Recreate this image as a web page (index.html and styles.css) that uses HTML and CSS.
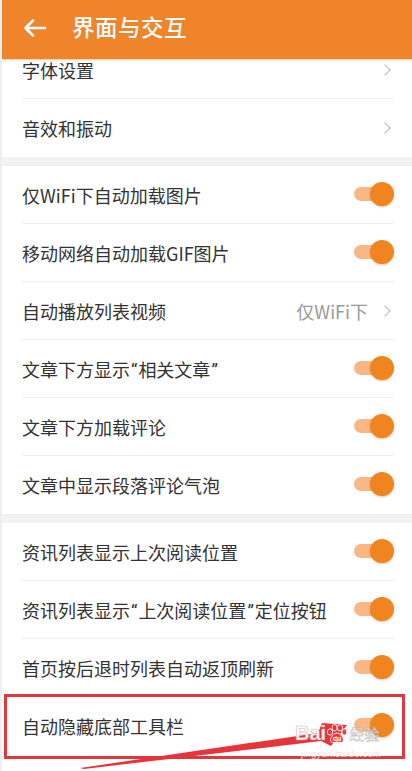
FILE: index.html
```html
<!DOCTYPE html>
<html lang="zh-CN">
<head>
<meta charset="utf-8">
<title>界面与交互</title>
<link rel="stylesheet" href="styles.css">
</head>
<body>
<div class="page">
  <header class="appbar">
    <svg class="back" width="24" height="20" viewBox="0 0 24 20"><path d="M22 10H3M10 2.5L2.5 10L10 17.5" fill="none" stroke="#fff" stroke-width="2.6" stroke-linecap="round" stroke-linejoin="round"/></svg>
    <h1 class="title">界面与交互</h1>
  </header>
  <main class="content">
    <section class="group">
      <div class="row"><span class="label">字体设置</span><span class="chev"></span></div>
      <div class="row"><span class="label">音效和振动</span><span class="chev"></span></div>
    </section>
    <section class="group">
      <div class="row"><span class="label">仅WiFi下自动加载图片</span><span class="toggle"><span class="track"></span><span class="knob"></span></span></div>
      <div class="row"><span class="label">移动网络自动加载GIF图片</span><span class="toggle"><span class="track"></span><span class="knob"></span></span></div>
      <div class="row"><span class="label">自动播放列表视频</span><span class="value">仅WiFi下</span><span class="chev"></span></div>
      <div class="row"><span class="label">文章下方显示<span class="q">“</span>相关文章<span class="q">”</span></span><span class="toggle"><span class="track"></span><span class="knob"></span></span></div>
      <div class="row"><span class="label">文章下方加载评论</span><span class="toggle"><span class="track"></span><span class="knob"></span></span></div>
      <div class="row"><span class="label">文章中显示段落评论气泡</span><span class="toggle"><span class="track"></span><span class="knob"></span></span></div>
    </section>
    <section class="group">
      <div class="row"><span class="label">资讯列表显示上次阅读位置</span><span class="toggle"><span class="track"></span><span class="knob"></span></span></div>
      <div class="row"><span class="label">资讯列表显示<span class="q">“</span>上次阅读位置<span class="q">”</span>定位按钮</span><span class="toggle"><span class="track"></span><span class="knob"></span></span></div>
      <div class="row"><span class="label">首页按后退时列表自动返顶刷新</span><span class="toggle"><span class="track"></span><span class="knob"></span></span></div>
      <div class="row"><span class="label">自动隐藏底部工具栏</span><span class="toggle"><span class="track"></span><span class="knob"></span></span></div>
    </section>
  </main>

  <svg class="annot" width="412" height="771" viewBox="0 0 412 771">
    <rect x="5.5" y="695.5" width="398" height="62" fill="none" stroke="#e0383c" stroke-width="3"/>
    <polygon points="80,768 318,733 322,723 347,725 331,746 321,741 84,769" fill="#e8333a"/>
  </svg>

  <div class="watermark">
    <div class="wm-top">
      <span class="wm-bai">Bai</span>
      <svg class="paw" width="22" height="20" viewBox="0 0 22 20">
        <ellipse cx="4" cy="8" rx="2.6" ry="3.2" fill="#e8333a" stroke="#fff" stroke-width="1"/>
        <ellipse cx="8.5" cy="3.8" rx="2.6" ry="3.2" fill="#e8333a" stroke="#fff" stroke-width="1"/>
        <ellipse cx="14" cy="3.8" rx="2.6" ry="3.2" fill="#e8333a" stroke="#fff" stroke-width="1"/>
        <ellipse cx="18.4" cy="8" rx="2.6" ry="3.2" fill="#e8333a" stroke="#fff" stroke-width="1"/>
        <path d="M11 9c3 0 6.5 4 6.5 7 0 2.5-2.5 3-6.5 2-4 1-6.5 .5-6.5-2 0-3 3.5-7 6.5-7z" fill="#e8333a" stroke="#fff" stroke-width="1"/>
        <text x="11" y="17" text-anchor="middle" font-size="7" fill="#fff" font-family="Liberation Sans, sans-serif" font-weight="bold">du</text>
      </svg>
      <span class="wm-jy">经验</span>
    </div>
    <div class="wm-url">jingyan.baidu.com</div>
  </div>
</div>
</body>
</html>
```
FILE: styles.css
```css
* { box-sizing: border-box; }
html, body { margin: 0; padding: 0; }
body {
  background: #ffffff;
  font-family: "Noto Sans CJK SC", "Noto Sans", sans-serif;
}
.page {
  position: relative;
  width: 412px;
  height: 771px;
  overflow: hidden;
  background: #fff;
  border-left: 2px solid #eeeeee;
}
.appbar {
  position: relative;
  z-index: 2;
  height: 59px;
  background: #f0842a;
  display: flex;
  align-items: center;
  padding-left: 21px;
  box-shadow: 0 1px 1px rgba(240,132,42,0.35);
}
.back { flex: none; margin-top: -3px; }
.title {
  margin: -6px 0 0 25px;
  color: #fff;
  font-size: 22.5px;
  font-weight: 500;
  letter-spacing: 0.5px;
  line-height: 1;
}
.content {
  margin-top: -18px;
  background: #f2f2f2;
  display: flex;
  flex-direction: column;
  gap: 9px;
}
.group { background: #fff; }
.row {
  height: 58px;
  display: flex;
  align-items: center;
  padding: 0 20px 0 20px;
  position: relative;
}
.row + .row::before {
  content: "";
  position: absolute;
  top: -1px;
  left: 20px;
  right: 18px;
  height: 1px;
  background: #efefef;
}
.label {
  flex: 1;
  font-size: 18px;
  color: #333333;
  white-space: nowrap;
  margin-top: -1px;
}
.q {
  font-family: Roboto, "Noto Sans", sans-serif;
  margin: 0 1px;
}
.value {
  font-size: 18px;
  color: #9a9a9a;
  margin-right: 13px;
  margin-top: -1px;
}
.chev {
  width: 8px;
  height: 8px;
  border-top: 1.5px solid #b8b8b8;
  border-right: 1.5px solid #b8b8b8;
  transform: rotate(45deg);
  margin-right: 3px;
}
.toggle {
  position: relative;
  width: 40px;
  height: 24px;
  flex: none;
  margin-top: -3px;
  margin-right: -2px;
}
.track {
  position: absolute;
  left: 0;
  top: 5px;
  width: 32px;
  height: 14px;
  border-radius: 7px;
  background: #f8b784;
}
.knob {
  position: absolute;
  right: 0;
  top: 0;
  width: 24px;
  height: 24px;
  border-radius: 50%;
  background: #f0841f;
  box-shadow: 0 1px 2px rgba(160,80,10,0.35);
}
.annot {
  position: absolute;
  left: -2px;
  top: 0;
  pointer-events: none;
  z-index: 3;
}
.watermark {
  position: absolute;
  left: 293px;
  top: 719px;
  z-index: 4;
  opacity: 0.92;
}
.wm-top {
  display: flex;
  align-items: flex-end;
  height: 24px;
}
.wm-bai {
  font-family: "Liberation Sans", Arial, sans-serif;
  font-weight: bold;
  font-size: 20px;
  line-height: 20px;
  color: #fff;
  -webkit-text-stroke: 0.6px #b9b9b9;
}
.paw { margin: 0 1px -1px 0; }
.wm-jy {
  font-size: 15px;
  line-height: 18px;
  color: #fff;
  -webkit-text-stroke: 0.5px #b0b0b0;
}
.wm-url {
  font-family: "Liberation Sans", Arial, sans-serif;
  font-size: 9.5px;
  color: #e8e8e8;
  margin-top: 5px;
  margin-left: 6px;
  letter-spacing: 0.2px;
}
```
